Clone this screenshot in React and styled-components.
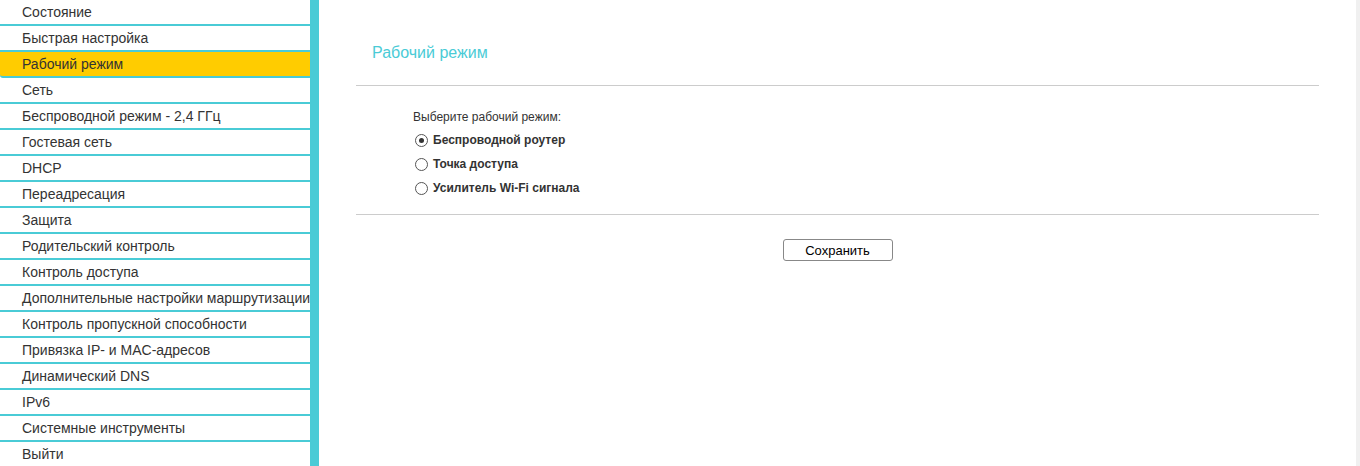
import React, { useState } from "react";
import styled, { createGlobalStyle } from "styled-components";

const GlobalStyle = createGlobalStyle`
    html, body {
        margin: 0;
        padding: 0;
        background: #fff;
        font-family: "Liberation Sans", Arial, sans-serif;
        color: #333;
        overflow: hidden;
    }
`;

const Page = styled.div`
    display: flex;
    width: 1360px;
    height: 466px;
    overflow: hidden;
`;

const Sidebar = styled.nav`
    box-sizing: border-box;
    flex: 0 0 318px;
    border-right: 9px solid #4acbd6;
`;

const MenuList = styled.ul`
    list-style: none;
    margin: 0;
    padding: 0;
`;

const MenuItem = styled.li`
    height: 24px;
    line-height: 24px;
    padding-left: 22px;
    font-size: 14px;
    white-space: nowrap;
    overflow: hidden;
    color: #333;
    border-bottom: 2px solid #4acbd6;
    background: ${p => (p.$active ? "#ffcc00" : "#fff")};
    border-bottom-left-radius: ${p => (p.$active ? "3px" : "0")};
    cursor: pointer;

    &:last-child {
        border-bottom: none;
    }
`;

const Main = styled.main`
    flex: 1;
    padding: 0 37px;
`;

const Title = styled.h2`
    margin: 0;
    padding: 43px 0 22px 16px;
    font-size: 16px;
    font-weight: normal;
    color: #4acbd6;
    line-height: 20px;
    border-bottom: 1px solid #ccc;
`;

const Form = styled.div`
    padding: 24px 0 18px 57px;
    border-bottom: 1px solid #ccc;
`;

const Label = styled.div`
    font-size: 12px;
    line-height: 15px;
    margin-bottom: 8px;
`;

const Options = styled.div`
    display: flex;
    flex-direction: column;
    gap: 9px;
`;

const Option = styled.label`
    display: flex;
    align-items: center;
    gap: 5px;
    font-size: 12px;
    font-weight: bold;
    line-height: 15px;
    cursor: pointer;
`;

const Radio = styled.span`
    width: 11px;
    height: 11px;
    margin-left: 2px;
    border: 1px solid #555;
    border-radius: 50%;
    display: flex;
    align-items: center;
    justify-content: center;
    background: #fff;

    &::after {
        content: "";
        width: 5px;
        height: 5px;
        border-radius: 50%;
        background: #333;
        display: ${p => (p.$checked ? "block" : "none")};
    }
`;

const Actions = styled.div`
    display: flex;
    justify-content: center;
    padding-top: 24px;
`;

const Button = styled.button`
    width: 110px;
    height: 22px;
    font-family: "Liberation Sans", Arial, sans-serif;
    font-size: 13px;
    color: #000;
    background: #fff;
    border: 1px solid #888;
    border-radius: 3px;
    cursor: pointer;
`;

const Scrollbar = styled.div`
    flex: 0 0 4px;
    background: #f0f0f0;
`;

const menu = [
    "Состояние",
    "Быстрая настройка",
    "Рабочий режим",
    "Сеть",
    "Беспроводной режим - 2,4 ГГц",
    "Гостевая сеть",
    "DHCP",
    "Переадресация",
    "Защита",
    "Родительский контроль",
    "Контроль доступа",
    "Дополнительные настройки маршрутизации",
    "Контроль пропускной способности",
    "Привязка IP- и MAC-адресов",
    "Динамический DNS",
    "IPv6",
    "Системные инструменты",
    "Выйти",
];

const modes = ["Беспроводной роутер", "Точка доступа", "Усилитель Wi-Fi сигнала"];

export default function App() {
    const [mode, setMode] = useState(0);

    return (
        <>
            <GlobalStyle />
            <Page>
                <Sidebar>
                    <MenuList>
                        {menu.map(item => (
                            <MenuItem key={item} $active={item === "Рабочий режим"}>
                                {item}
                            </MenuItem>
                        ))}
                    </MenuList>
                </Sidebar>
                <Main>
                    <Title>Рабочий режим</Title>
                    <Form>
                        <Label>Выберите рабочий режим:</Label>
                        <Options>
                            {modes.map((m, i) => (
                                <Option key={m} onClick={() => setMode(i)}>
                                    <Radio $checked={mode === i} />
                                    {m}
                                </Option>
                            ))}
                        </Options>
                    </Form>
                    <Actions>
                        <Button>Сохранить</Button>
                    </Actions>
                </Main>
                <Scrollbar />
            </Page>
        </>
    );
}
